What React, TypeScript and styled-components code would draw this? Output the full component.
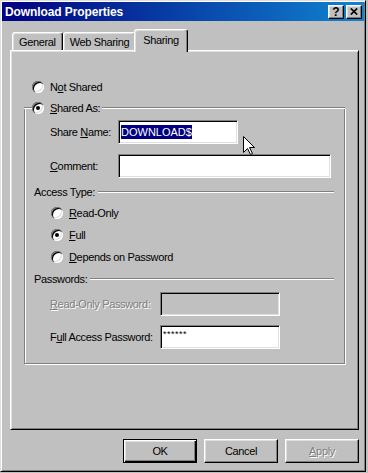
import * as React from "react";
import styled, { createGlobalStyle, css } from "styled-components";

const GlobalStyle = createGlobalStyle`
  html, body {
    margin: 0;
    padding: 0;
    background: #c0c0c0;
    overflow: hidden;
  }
  body {
    font-family: "Liberation Sans", Arial, sans-serif;
    font-size: 11px;
    letter-spacing: -0.35px;
    color: #000;
  }
  * {
    box-sizing: border-box;
  }
`;

const Window = styled.div`
  position: relative;
  width: 366px;
  height: 472px;
  background: #c0c0c0;
  border: 1px solid;
  border-color: #dfdfdf #000 #000 #dfdfdf;
  box-shadow: inset 1px 1px 0 #fff, inset -1px -1px 0 #808080;
  padding: 1px;
  display: flex;
  flex-direction: column;
`;

const TitleBar = styled.div`
  height: 19px;
  display: flex;
  align-items: center;
  justify-content: space-between;
  padding: 0 2px 0 3px;
  background: linear-gradient(90deg, #000080 0%, #1084d0 100%);
`;

const Title = styled.span`
  color: #fff;
  font-weight: bold;
  font-size: 12px;
  letter-spacing: -0.1px;
`;

const TitleButtons = styled.div`
  display: flex;
  gap: 2px;
`;

const TitleButton = styled.div`
  width: 16px;
  height: 14px;
  display: flex;
  align-items: center;
  justify-content: center;
  background: #c0c0c0;
  border: 1px solid;
  border-color: #fff #000 #000 #fff;
  box-shadow: inset -1px -1px 0 #808080, inset 1px 1px 0 #dfdfdf;
  font-weight: bold;
  font-size: 12px;
  letter-spacing: 0;
  line-height: 1;
`;

const Body = styled.div`
  display: flex;
  flex-direction: column;
  padding: 8px 5px 0 8px;
`;

const TabRow = styled.div`
  display: flex;
  align-items: flex-end;
  height: 21px;
  padding-left: 2px;
`;

const Tab = styled.div<{ $active?: boolean }>`
  height: 18px;
  padding: 0 6px;
  display: flex;
  align-items: center;
  background: #c0c0c0;
  border: 1px solid;
  border-bottom: none;
  border-color: #fff #000 transparent #fff;
  border-radius: 3px 3px 0 0;
  box-shadow: inset -1px 0 0 #808080, inset 1px 1px 0 #dfdfdf;
  ${(p) =>
    p.$active &&
    css`
      position: relative;
      z-index: 1;
      height: 23px;
      margin: 0 -2px -2px;
      padding: 0 8px 3px;
    `}
`;

const Panel = styled.div`
  height: 380px;
  display: flex;
  flex-direction: column;
  padding: 29px 13px 0 13px;
  border: 1px solid;
  border-color: #fff #000 #000 #fff;
  box-shadow: inset 1px 1px 0 #dfdfdf, inset -1px -1px 0 #808080;
`;

const RadioRow = styled.label<{ $indent: number; $mt?: number }>`
  display: flex;
  align-items: center;
  gap: 6px;
  height: 14px;
  margin-left: ${(p) => p.$indent}px;
  margin-top: ${(p) => p.$mt ?? 0}px;
`;

const RadioCircle = styled.span<{ $checked?: boolean }>`
  flex: none;
  width: 12px;
  height: 12px;
  border-radius: 50%;
  background: #fff;
  display: flex;
  align-items: center;
  justify-content: center;
  box-shadow: inset 1px 1px 0 #808080, inset 2px 2px 0 #000,
    inset -1px -1px 0 #fff, inset -2px -2px 0 #dfdfdf;
  ${(p) =>
    p.$checked &&
    css`
      &::after {
        content: "";
        width: 4px;
        height: 4px;
        border-radius: 50%;
        background: #000;
      }
    `}
`;

const GroupBox = styled.div`
  display: flex;
  flex-direction: column;
  margin-top: 14px;
  padding: 0 0 14px 0;
  border: 1px solid #808080;
  border-top: none;
  box-shadow: inset 1px 0 0 #fff, 1px 1px 0 #fff;
`;

const GroupHeader = styled.div`
  display: flex;
  align-items: center;
  height: 14px;
  margin: -7px -1px 0 -1px;
`;

const Etch = styled.div<{ $width?: number }>`
  height: 2px;
  border-top: 1px solid #808080;
  border-bottom: 1px solid #fff;
  ${(p) => (p.$width ? `width: ${p.$width}px; flex: none;` : "flex: 1;")}
`;

const Legend = styled.div`
  display: flex;
  align-items: center;
  gap: 6px;
  padding-right: 2px;
`;

const SubHeader = styled.div<{ $mt: number }>`
  display: flex;
  align-items: center;
  gap: 3px;
  height: 14px;
  margin: ${(p) => p.$mt}px 10px 0 9px;
`;

const FieldRow = styled.div<{ $mt: number }>`
  display: flex;
  align-items: center;
  margin: ${(p) => p.$mt}px 0 0 25px;
`;

const FieldLabel = styled.label<{ $width: number; $disabled?: boolean }>`
  width: ${(p) => p.$width}px;
  flex: none;
  ${(p) =>
    p.$disabled &&
    css`
      color: #808080;
      text-shadow: 1px 1px 0 #fff;
    `}
`;

const TextBox = styled.div<{ $width: number; $disabled?: boolean }>`
  width: ${(p) => p.$width}px;
  height: 24px;
  flex: none;
  display: flex;
  align-items: center;
  padding: 0 2px;
  background: ${(p) => (p.$disabled ? "#c0c0c0" : "#fff")};
  border: 1px solid;
  border-color: #808080 #fff #fff #808080;
  box-shadow: inset 1px 1px 0 #000, inset -1px -1px 0 #dfdfdf;
  letter-spacing: 0;
`;

const Selected = styled.span`
  background: #000080;
  color: #fff;
  padding: 1px 0;
  font-size: 11px;
`;

const Masked = styled.span`
  align-self: flex-start;
  margin-top: 3px;
  font-size: 9px;
  letter-spacing: 0.5px;
`;

const RadioList = styled.div`
  display: flex;
  flex-direction: column;
  gap: 8px;
  margin-top: 7px;
`;

const ButtonBar = styled.div`
  display: flex;
  justify-content: flex-end;
  gap: 7px;
  margin-top: 9px;
`;

const Button = styled.div<{ $default?: boolean; $disabled?: boolean }>`
  width: 74px;
  height: 24px;
  display: flex;
  align-items: center;
  justify-content: center;
  background: #c0c0c0;
  border: 1px solid;
  border-color: #fff #000 #000 #fff;
  box-shadow: inset -1px -1px 0 #808080, inset 1px 1px 0 #dfdfdf;
  ${(p) =>
    p.$default &&
    css`
      border: 1px solid #000;
      box-shadow: inset 1px 1px 0 #fff, inset -1px -1px 0 #000,
        inset -2px -2px 0 #808080, inset 2px 2px 0 #dfdfdf;
    `}
  ${(p) =>
    p.$disabled &&
    css`
      color: #808080;
      text-shadow: 1px 1px 0 #fff;
    `}
`;

const Cursor = styled.svg`
  position: absolute;
  left: 242px;
  top: 135px;
  z-index: 5;
`;

export default function App() {
  return (
    <>
      <GlobalStyle />
      <Window>
        <TitleBar>
          <Title>Download Properties</Title>
          <TitleButtons>
            <TitleButton>?</TitleButton>
            <TitleButton>
              <svg width="8" height="7" viewBox="0 0 8 7">
                <path d="M0.8 0.5 L7.2 6.5 M7.2 0.5 L0.8 6.5" stroke="#000" strokeWidth="1.7" />
              </svg>
            </TitleButton>
          </TitleButtons>
        </TitleBar>
        <Body>
          <TabRow>
            <Tab>General</Tab>
            <Tab>Web Sharing</Tab>
            <Tab $active>Sharing</Tab>
          </TabRow>
          <Panel>
            <RadioRow $indent={8}>
              <RadioCircle />
              <span>
                N<u>o</u>t Shared
              </span>
            </RadioRow>
            <GroupBox>
              <GroupHeader>
                <Etch $width={8} />
                <Legend>
                  <RadioCircle $checked />
                  <span>
                    <u>S</u>hared As:
                  </span>
                </Legend>
                <Etch />
              </GroupHeader>
              <FieldRow $mt={5}>
                <FieldLabel $width={68}>
                  Share <u>N</u>ame:
                </FieldLabel>
                <TextBox $width={120}>
                  <Selected>DOWNLOAD$</Selected>
                </TextBox>
              </FieldRow>
              <FieldRow $mt={10}>
                <FieldLabel $width={68}>
                  <u>C</u>omment:
                </FieldLabel>
                <TextBox $width={213} />
              </FieldRow>
              <SubHeader $mt={7}>
                <span>Access Type:</span>
                <Etch />
              </SubHeader>
              <RadioList>
                <RadioRow $indent={26}>
                  <RadioCircle />
                  <span>
                    <u>R</u>ead-Only
                  </span>
                </RadioRow>
                <RadioRow $indent={26}>
                  <RadioCircle $checked />
                  <span>
                    <u>F</u>ull
                  </span>
                </RadioRow>
                <RadioRow $indent={26}>
                  <RadioCircle />
                  <span>
                    <u>D</u>epends on Password
                  </span>
                </RadioRow>
              </RadioList>
              <SubHeader $mt={8}>
                <span>Passwords:</span>
                <Etch />
              </SubHeader>
              <FieldRow $mt={6}>
                <FieldLabel $width={110} $disabled>
                  <u>R</u>ead-Only Password:
                </FieldLabel>
                <TextBox $width={120} $disabled />
              </FieldRow>
              <FieldRow $mt={9}>
                <FieldLabel $width={110}>
                  F<u>u</u>ll Access Password:
                </FieldLabel>
                <TextBox $width={120}>
                  <Masked>******</Masked>
                </TextBox>
              </FieldRow>
            </GroupBox>
          </Panel>
          <ButtonBar>
            <Button $default>OK</Button>
            <Button>Cancel</Button>
            <Button $disabled>
              <span>
                <u>A</u>pply
              </span>
            </Button>
          </ButtonBar>
        </Body>
        <Cursor width="13" height="20" viewBox="0 0 13 20">
          <path
            d="M0.5 0.5 L0.5 16.5 L4.5 12.5 L7.5 18.5 L9.5 17.5 L6.5 11.5 L11.5 11.5 Z"
            fill="#fff"
            stroke="#000"
            strokeWidth="1"
          />
        </Cursor>
      </Window>
    </>
  );
}
